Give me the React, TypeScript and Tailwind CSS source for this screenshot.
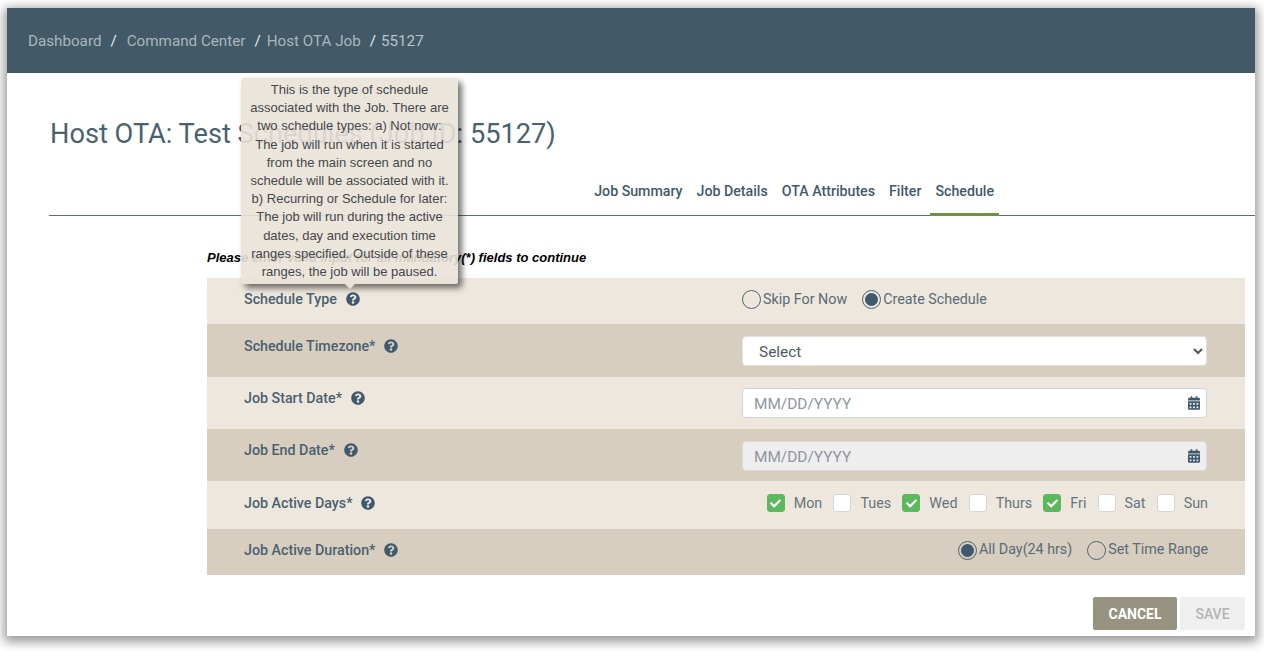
import { FaQuestionCircle, FaCalendarAlt, FaCheck } from "react-icons/fa";

function Help() {
  return <FaQuestionCircle className="w-[14px] h-[14px] text-[#3f5a6e] shrink-0" />;
}

function Label({ text }: { text: string }) {
  return (
    <div className="flex items-center gap-[9px] text-[14.25px] leading-[20px] font-medium text-[#4b6170]">
      <span>{text}</span>
      <Help />
    </div>
  );
}

function Radio({ on, label }: { on?: boolean; label: string }) {
  return (
    <span className="flex items-center gap-[2px] text-[14.3px] text-[#5b6b76]">
      <span className="w-[19px] h-[19px] rounded-full border border-[#4f6472] flex items-center justify-center bg-transparent">
        {on && <span className="w-[13px] h-[13px] rounded-full bg-[#3f5a6e]" />}
      </span>
      {label}
    </span>
  );
}

function Check({ on, label }: { on?: boolean; label: string }) {
  return (
    <span className="flex items-center gap-[9px] text-[14.3px] text-[#68747c]">
      <span
        className={`w-[18px] h-[18px] rounded-[3px] flex items-center justify-center border ${
          on ? "bg-[#5cb85c] border-[#5cb85c]" : "bg-white border-[#d6d6d6]"
        }`}
      >
        {on && <FaCheck className="w-[11px] h-[11px] text-white" />}
      </span>
      <span className="pt-[2px]">{label}</span>
    </span>
  );
}

function DateField({ disabled }: { disabled?: boolean }) {
  return (
    <div className="relative w-[465px] h-[30px]">
      <input
        disabled={disabled}
        placeholder="MM/DD/YYYY"
        className={`w-full h-full rounded-[4px] border border-[#ced4da] pl-[11px] pr-8 pt-[2px] text-[15.4px] placeholder:text-[#8f979e] placeholder:opacity-100 outline-none ${
          disabled ? "bg-[#eeeeee] border-[#dedbd5]" : "bg-white"
        }`}
      />
      <FaCalendarAlt className="absolute right-[7px] top-[8px] w-[12px] h-[14px] text-[#3f5a6e]" />
    </div>
  );
}

export default function App() {
  return (
    <div className="w-[1264px] h-[653px] bg-white pt-[8px] pl-[7px] overflow-hidden font-['Roboto',sans-serif]">
      <div className="relative w-[1248px] h-[628px] bg-white shadow-[0_3px_10px_3px_rgba(0,0,0,0.4)]">
        <div className="h-[65px] bg-[#425a68] flex items-center pl-[21px] pt-[1px] text-[15.2px] text-[#a9b5bc]">
          <span>Dashboard</span>
          <span className="ml-[9px] mr-[10px] text-[#e6eaec]">/</span>
          <span>Command Center</span>
          <span className="ml-[9px] mr-[6px] text-[#e6eaec]">/</span>
          <span>Host OTA Job</span>
          <span className="ml-[9px] mr-[5px] text-[#e6eaec]">/</span>
          <span className="text-[#b9c3c9]">55127</span>
        </div>

        <h1 className="pl-[43px] pt-[44px] text-[27.2px] leading-[34px] font-normal text-[#4a6170]">
          Host OTA: Test Schedules (Job ID: 55127)
        </h1>

        <div className="ml-[42px] mt-[24px] h-[41px] border-b border-[#5f6f79] flex justify-end pr-[256px] text-[14.2px] font-medium text-[#43596a]">
          <div className="flex gap-[4px] h-[41px]">
            <span className="px-[5px] pt-[6px] leading-[20px]">Job Summary</span>
            <span className="px-[5px] pt-[6px] leading-[20px]">Job Details</span>
            <span className="px-[5px] pt-[6px] leading-[20px]">OTA Attributes</span>
            <span className="px-[5px] pt-[6px] leading-[20px]">Filter</span>
            <span className="px-[5px] pt-[6px] leading-[20px] h-[41px] border-b-[3px] border-[#6b9440]">Schedule</span>
          </div>
        </div>

        <div className="ml-[200px] mr-[10px]">
          <p className="mt-[34px] h-[28px] text-[13px] leading-[16px] font-bold italic text-black font-['Liberation_Sans',sans-serif]">
            Please enter valid input for all mandatory(*) fields to continue
          </p>

          <div className="flex h-[46px] bg-[#eee7dd] pl-[37px] pr-[38px] justify-between items-start pt-[11px]">
            <Label text="Schedule Type" />
            <div className="w-[465px] flex gap-[15px]">
              <Radio label="Skip For Now" />
              <Radio on label="Create Schedule" />
            </div>
          </div>

          <div className="flex h-[53px] bg-[#d7cebf] pl-[37px] pr-[38px] justify-between items-start pt-[12px]">
            <Label text="Schedule Timezone*" />
            <select className="w-[465px] h-[30px] rounded-[4px] bg-white border border-[#e4e0d8] pl-[12px] pt-[2px] text-[15.4px] text-[#4f5962] outline-none">
              <option>Select</option>
            </select>
          </div>

          <div className="flex h-[52px] bg-[#eee7dd] pl-[37px] pr-[38px] justify-between items-start pt-[11px]">
            <Label text="Job Start Date*" />
            <DateField />
          </div>

          <div className="flex h-[52px] bg-[#d7cebf] pl-[37px] pr-[38px] justify-between items-start pt-[12px]">
            <div className="-mt-[1px]">
              <Label text="Job End Date*" />
            </div>
            <DateField disabled />
          </div>

          <div className="flex h-[48px] bg-[#eee7dd] pl-[37px] pr-[37px] pb-[4px] justify-between items-center">
            <Label text="Job Active Days*" />
            <div className="flex items-center gap-[11.2px]">
              <Check on label="Mon" />
              <Check label="Tues" />
              <Check on label="Wed" />
              <Check label="Thurs" />
              <Check on label="Fri" />
              <Check label="Sat" />
              <Check label="Sun" />
            </div>
          </div>

          <div className="flex h-[46px] bg-[#d7cebf] pl-[37px] pr-[37px] pb-[4px] justify-between items-center">
            <Label text="Job Active Duration*" />
            <div className="flex gap-[15px]">
              <Radio on label="All Day(24 hrs)" />
              <Radio label="Set Time Range" />
            </div>
          </div>

          <div className="flex justify-end gap-[3px] mt-[22px]">
            <button className="w-[84px] h-[33px] pt-[2px] rounded-[2px] bg-[#979380] text-white text-[14px] font-bold">CANCEL</button>
            <button className="w-[65px] h-[33px] pt-[2px] rounded-[2px] bg-[#efefef] text-[#b4b4b4] text-[14px] font-medium">SAVE</button>
          </div>
        </div>

        <div className="absolute left-[234px] top-[70px] w-[217px] h-[206px] rounded-[3px] bg-[#e9e2d8]/90 shadow-[4px_4px_6px_rgba(0,0,0,0.55)] px-[8px] pt-[3px] text-center text-[13px] leading-[18.2px] text-[#45484a] font-['Liberation_Sans',sans-serif]">
          This is the type of schedule associated with the Job. There are two schedule types: a) Not now: The job will run when it is started from the main screen and no schedule will be associated with it. b) Recurring or Schedule for later: The job will run during the active dates, day and execution time ranges specified. Outside of these ranges, the job will be paused.
          <span className="absolute left-[104px] -bottom-[5px] w-0 h-0 border-l-[5px] border-r-[5px] border-t-[5px] border-l-transparent border-r-transparent border-t-[#e9e2d8]" />
        </div>
      </div>
    </div>
  );
}
